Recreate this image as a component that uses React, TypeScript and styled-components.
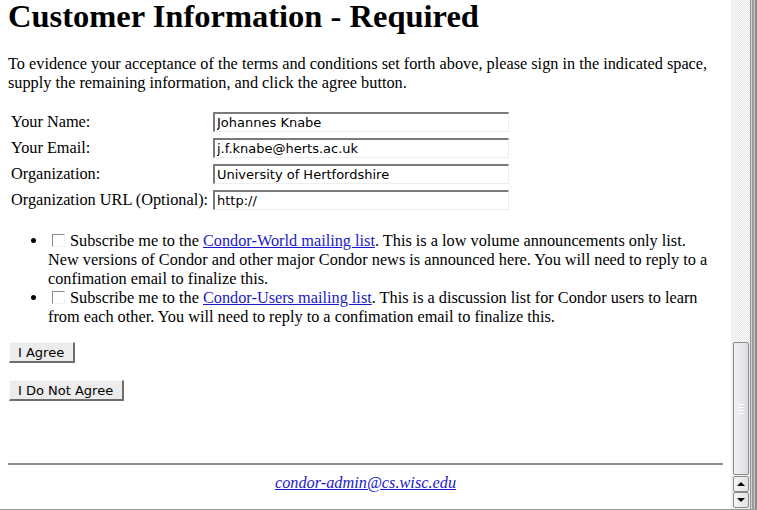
import React from "react"
import styled, { createGlobalStyle } from "styled-components"

const GlobalStyle = createGlobalStyle`
  html, body {
    margin: 0;
    padding: 0;
    overflow: hidden;
    background: #fff;
  }
  body {
    font-family: "Liberation Serif", "Times New Roman", serif;
    font-size: 16.3px;
    color: #000;
  }
`

const Window = styled.div`
  display: flex;
  width: 757px;
  height: 510px;
  box-sizing: border-box;
  border-bottom: 1px solid #9a9a9a;
  overflow: hidden;
`

const Page = styled.div`
  flex: 1;
  padding: 0 8px;
  overflow: hidden;
`

const Title = styled.h1`
  margin: 0;
  font-size: 32.5px;
  line-height: 32px;
  font-weight: 700;
`

const Intro = styled.p`
  margin: 22px 0 20px;
  line-height: 19px;
`

const Fields = styled.div`
  display: grid;
  grid-template-columns: 202px 296px;
  row-gap: 6px;
  padding-left: 3px;
  align-items: center;
`

const Label = styled.label`
  line-height: 20px;
`

const TextInput = styled.input`
  box-sizing: border-box;
  width: 296px;
  height: 20px;
  margin: 0;
  padding: 0 2px;
  font-family: "DejaVu Sans", Verdana, sans-serif;
  font-size: 13px;
  color: #000;
  background: #fff;
  border-style: solid;
  border-width: 2px 1px 1px 2px;
  border-color: #7a7a7a #eeeeee #eeeeee #7a7a7a;
  outline: none;
`

const Lists = styled.ul`
  margin: 21px 10px 16px 0;
  padding-left: 40px;
  line-height: 19px;
  list-style: disc;
`

const Item = styled.li``

const Check = styled.span`
  display: inline-block;
  box-sizing: border-box;
  width: 13px;
  height: 13px;
  margin: 0 5px 0 4px;
  vertical-align: -1px;
  border-style: solid;
  border-width: 1px;
  border-color: #8c8c8c #f2f2f2 #f2f2f2 #8c8c8c;
  background: #fff;
`

const Link = styled.a`
  color: #1a1ac8;
  text-decoration: underline;
`

const Form = styled.form`
  display: flex;
  flex-direction: column;
  align-items: flex-start;
  gap: 17px;
  padding-left: 1px;
`

const Button = styled.button`
  box-sizing: border-box;
  height: 21px;
  margin: 0;
  padding: 0 9px 0 8px;
  font-family: "DejaVu Sans", Verdana, sans-serif;
  font-size: 13px;
  color: #000;
  background: #ececec;
  border-style: solid;
  border-width: 1px 2px 2px 1px;
  border-color: #fafafa #6e6e6e #6e6e6e #fafafa;
  cursor: pointer;
`

const Rule = styled.hr`
  margin: 62px 0 8px;
  border: none;
  border-top: 2px solid #8c8c8c;
`

const Footer = styled.address`
  text-align: center;
  font-style: italic;
`

const Scrollbar = styled.div`
  width: 18px;
  display: flex;
  flex-direction: column;
  padding-bottom: 1px;
  background-color: #f4f4f4;
  background-image: repeating-conic-gradient(#e6e6e6 0 25%, #fbfbfb 0 50%);
  background-size: 2px 2px;
  border-left: 1px solid #f0f0f0;
`

const Trough = styled.div`
  flex: 1;
  display: flex;
  flex-direction: column;
  justify-content: flex-end;
  padding-bottom: 1px;
`

const Thumb = styled.div`
  box-sizing: border-box;
  height: 133px;
  margin: 0 1px;
  border: 1px solid #8a8a8a;
  border-radius: 2px;
  background: linear-gradient(to right, #f2f2f4, #dcdce2);
  display: flex;
  align-items: center;
  justify-content: center;
`

const Grip = styled.div`
  width: 6px;
  height: 12px;
  background-image: radial-gradient(circle, #fff 0.8px, transparent 1px);
  background-size: 2px 3px;
`

const Arrow = styled.div<{ $down?: boolean }>`
  box-sizing: border-box;
  height: 16px;
  margin: 0 1px;
  border: 1px solid #8a8a8a;
  border-radius: 2px;
  background: linear-gradient(to right, #f6f6f6, #e2e2e6);
  display: flex;
  align-items: center;
  justify-content: center;

  &::before {
    content: "";
    border-left: 4px solid transparent;
    border-right: 4px solid transparent;
    ${(p) => (p.$down ? "border-top: 4px solid #000;" : "border-bottom: 4px solid #000;")}
  }
`

const Edge = styled.div`
  width: 7px;
  background: linear-gradient(
    to right,
    #8e8e8e 0 1px,
    #d4d4d4 1px 2px,
    #9c9c9c 2px 4px,
    #c8c8c8 4px 5px,
    #8a8a8a 5px 7px
  );
`

const App: React.FC = () => {
  return (
    <Window>
      <GlobalStyle />
      <Page>
        <Title>Customer Information - Required</Title>
        <Intro>
          To evidence your acceptance of the terms and conditions set forth above, please sign in the
          indicated space, supply the remaining information, and click the agree button.
        </Intro>
        <Fields>
          <Label>Your Name:</Label>
          <TextInput defaultValue="Johannes Knabe" />
          <Label>Your Email:</Label>
          <TextInput defaultValue="j.f.knabe@herts.ac.uk" />
          <Label>Organization:</Label>
          <TextInput defaultValue="University of Hertfordshire" />
          <Label>Organization URL (Optional):</Label>
          <TextInput defaultValue="http://" />
        </Fields>
        <Lists>
          <Item>
            <Check />
            Subscribe me to the <Link href="#">Condor-World mailing list</Link>. This is a low volume
            announcements only list. New versions of Condor and other major Condor news is announced
            here. You will need to reply to a confimation email to finalize this.
          </Item>
          <Item>
            <Check />
            Subscribe me to the <Link href="#">Condor-Users mailing list</Link>. This is a discussion
            list for Condor users to learn from each other. You will need to reply to a confimation
            email to finalize this.
          </Item>
        </Lists>
        <Form>
          <Button type="button">I Agree</Button>
          <Button type="button">I Do Not Agree</Button>
        </Form>
        <Rule />
        <Footer>
          <Link href="#">condor-admin@cs.wisc.edu</Link>
        </Footer>
      </Page>
      <Scrollbar>
        <Trough>
          <Thumb>
            <Grip />
          </Thumb>
        </Trough>
        <Arrow />
        <Arrow $down />
      </Scrollbar>
      <Edge />
    </Window>
  )
}

export default App
